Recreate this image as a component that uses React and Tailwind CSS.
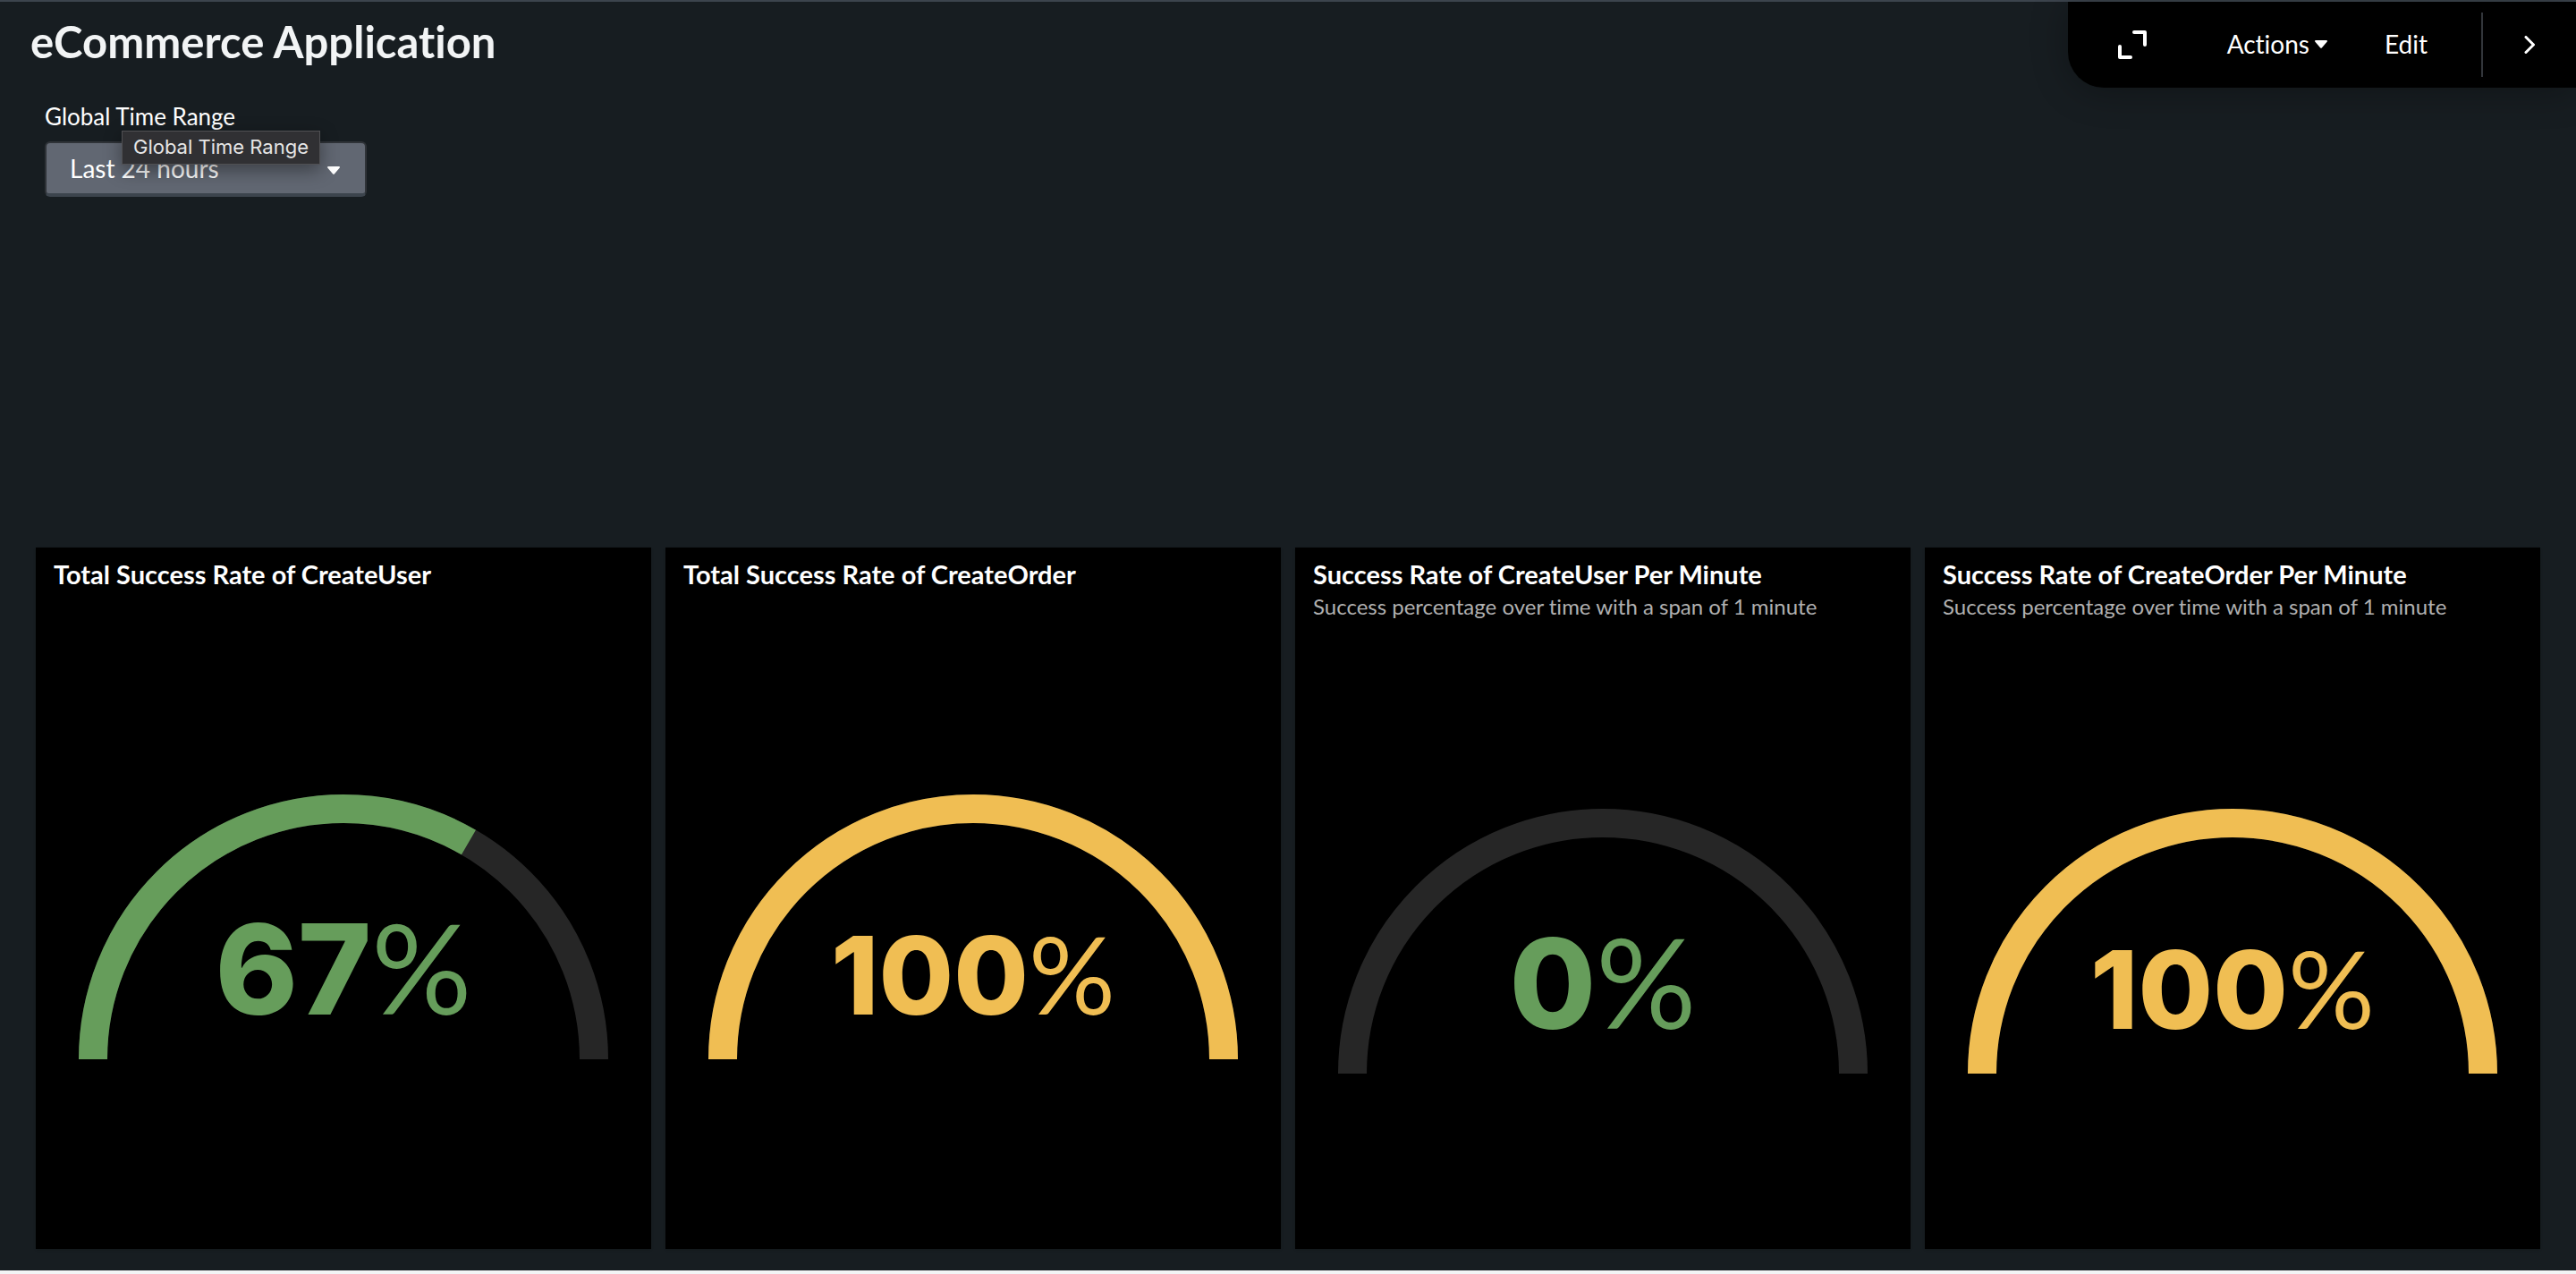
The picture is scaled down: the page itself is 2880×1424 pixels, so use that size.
const GREEN = '#669d5b';
const YELLOW = '#f0be53';

const panels = [
  { title: 'Total Success Rate of CreateUser', ratio: 2 / 3, color: GREEN },
  { title: 'Total Success Rate of CreateOrder', ratio: 1, color: YELLOW },
  {
    title: 'Success Rate of CreateUser Per Minute',
    subtitle: 'Success percentage over time with a span of 1 minute',
    ratio: 0,
    color: GREEN,
  },
  {
    title: 'Success Rate of CreateOrder Per Minute',
    subtitle: 'Success percentage over time with a span of 1 minute',
    ratio: 1,
    color: YELLOW,
  },
];

const ARC = 'M16 296 A280 280 0 0 1 576 296';

function Caret({ className }) {
  return (
    <svg viewBox="0 0 14 9" className={className} fill="currentColor" aria-hidden="true">
      <path d="M1.2 0h11.6c1 0 1.5 1 .8 1.8L8 8.2c-.6.7-1.4.7-2 0L.4 1.8C-.3 1 .2 0 1.2 0z" />
    </svg>
  );
}

function Gauge({ ratio, color, label }) {
  const percent = Math.round(ratio * 100);
  return (
    <svg viewBox="0 0 592 296" className="w-full" role="img" aria-label={`${label}: ${percent}%`}>
      <path d={ARC} fill="none" stroke="#262626" strokeWidth="32" />
      {ratio > 0 && (
        <path
          d={ARC}
          fill="none"
          stroke={color}
          strokeWidth="32"
          pathLength="100"
          strokeDasharray={ratio === 1 ? undefined : `${ratio * 100} 100`}
        />
      )}
      <text
        x="296"
        y="246"
        textAnchor="middle"
        fill={color}
        className={percent === 100 ? "font-['Inter',sans-serif] text-[121px]" : "font-['Inter',sans-serif] text-[140px]"}
      >
        <tspan className="font-extrabold">{percent}</tspan>
        <tspan className="font-['Lato',sans-serif] font-normal">%</tspan>
      </text>
    </svg>
  );
}

function Panel({ title, subtitle, ratio, color }) {
  return (
    <section className="flex flex-col bg-black shadow-sm">
      <header className={subtitle ? 'h-24 px-5 pt-3.5' : 'h-16 px-5 pt-3.5'}>
        <h2 className="text-[29px] leading-8 font-bold text-white">{title}</h2>
        {subtitle && <p className="pt-1 text-[24px] leading-8 text-[#b0b0b0]">{subtitle}</p>}
      </header>
      <div className="flex flex-1 items-center px-12">
        <Gauge ratio={ratio} color={color} label={title} />
      </div>
    </section>
  );
}

export default function App() {
  return (
    <div className="flex min-h-screen flex-col border-t-2 border-b-4 border-t-[#3c444d] border-b-[#f2f4f5] bg-[#171d21] font-['Lato','Open_Sans',sans-serif] text-white [font-variant-ligatures:none]">
      <header className="flex items-start justify-between">
        <h1 className="pt-4 pl-[34px] text-[49px] leading-14 font-bold text-[#f2f4f5]">eCommerce Application</h1>
        <div className="flex h-24 items-center rounded-bl-[40px] bg-black text-[28px] leading-8 shadow-[0_4px_40px_rgba(0,0,0,0.3)]">
          <button type="button" aria-label="Full screen" className="pr-[90px] pl-14">
            <svg viewBox="0 0 32 32" className="size-8" fill="none" stroke="currentColor" strokeWidth="4" strokeLinecap="round" strokeLinejoin="round" aria-hidden="true">
              <path d="M18 2h12v14M14 30H2V18" />
            </svg>
          </button>
          <button type="button" className="flex items-center gap-1.5 pr-16 pb-0.5">
            Actions
            <Caret className="h-[9px] w-3.5" />
          </button>
          <button type="button" className="pr-[60px] pb-0.5">Edit</button>
          <div className="h-18 w-0.5 bg-[#33363b]" />
          <button type="button" aria-label="Collapse toolbar" className="px-[46px]">
            <svg viewBox="0 0 12 20" className="h-5 w-3" fill="none" stroke="currentColor" strokeWidth="3" strokeLinecap="round" strokeLinejoin="round" aria-hidden="true">
              <path d="M2 1.5l8.5 8.5L2 18.5" />
            </svg>
          </button>
        </div>
      </header>

      <div className="relative w-[410px] pt-4 pb-[392px] pl-[50px]">
        <label htmlFor="time-range" className="block text-[26px] leading-8">Global Time Range</label>
        <div className="relative mt-3">
          <select
            id="time-range"
            className="h-[62px] w-full appearance-none rounded-md border-2 border-b-4 border-[#2f3338] border-b-[#3c444d] bg-[#616772] px-[26px] text-[28px] text-white"
          >
            <option>Last 24 hours</option>
          </select>
          <Caret className="pointer-events-none absolute top-7 right-[30px] h-[9px] w-3.5" />
        </div>
        <div
          role="tooltip"
          className="absolute top-12 left-[136px] border border-[#505053] bg-[#303033] px-3 pt-0.5 pb-1 font-['Inter',sans-serif] text-[22px] leading-[30px] whitespace-nowrap text-[#e6e6e6] shadow-[0_6px_20px_rgba(0,0,0,0.4)]"
        >
          Global Time Range
        </div>
      </div>

      <main className="grid flex-1 grid-cols-4 gap-4 px-10 pb-6">
        {panels.map((panel) => (
          <Panel key={panel.title} {...panel} />
        ))}
      </main>
    </div>
  );
}
